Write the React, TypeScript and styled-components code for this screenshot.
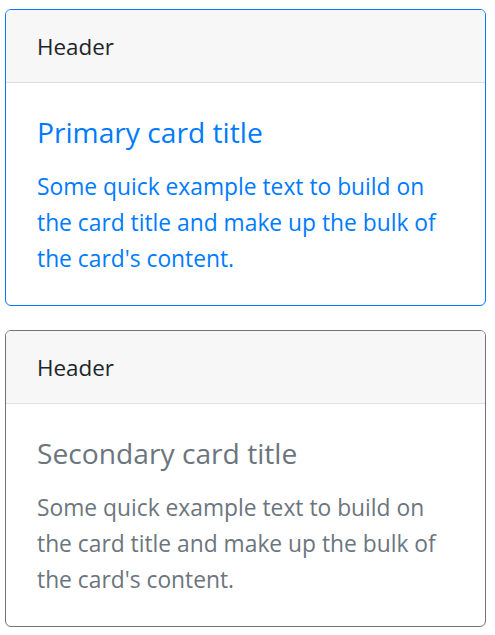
import React from "react";
import styled, { createGlobalStyle } from "styled-components";

const Global = createGlobalStyle`
  html, body { margin: 0; padding: 0; background: #fff; }
  body { font-family: "Open Sans", "Noto Sans", sans-serif; color: #212529; }
`;

const Page = styled.div`
  width: 481px;
  padding: 9px 0 0 5px;
  display: flex;
  flex-direction: column;
  gap: 24px;
`;

const Card = styled.div<{ $tone: string }>`
  border: 1px solid ${(p) => p.$tone};
  border-radius: 6px;
  overflow: hidden;
  background: #fff;
`;

const CardHeader = styled.div`
  background: #f7f7f7;
  border-bottom: 1px solid #dfdfdf;
  padding: 19px 30px 17px 31px;
  font-size: 22.4px;
  line-height: 36px;
  color: #212529;
`;

const CardBody = styled.div<{ $tone: string }>`
  padding: 31px 30px 28px 31px;
  color: ${(p) => p.$tone};
`;

const Title = styled.h5`
  margin: 0 0 19px;
  font-size: 28.2px;
  font-weight: 400;
  line-height: 36px;
`;

const Text = styled.p`
  margin: 0;
  font-size: 22.8px;
  line-height: 36px;
`;

const cards = [
  { tone: "#007bff", title: "Primary card title" },
  { tone: "#6c757d", title: "Secondary card title" },
];

export default function App() {
  return (
    <>
      <Global />
      <Page>
        {cards.map((c) => (
          <Card key={c.title} $tone={c.tone}>
            <CardHeader>Header</CardHeader>
            <CardBody $tone={c.tone}>
              <Title>{c.title}</Title>
              <Text>
                Some quick example text to build on
                <br />
                the card title and make up the bulk of
                <br />
                the card's content.
              </Text>
            </CardBody>
          </Card>
        ))}
      </Page>
    </>
  );
}
